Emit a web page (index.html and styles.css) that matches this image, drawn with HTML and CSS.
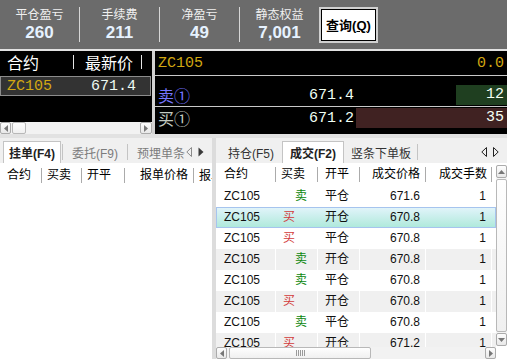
FILE: index.html
```html
<!DOCTYPE html>
<html lang="zh-CN">
<head>
  <meta charset="UTF-8" />
  <meta name="viewport" content="width=device-width,initial-scale=1.0" />
  <title>交易终端</title>
  <link rel="stylesheet" href="styles.css">
</head>
<body>
  <header class="summary">
    <div class="stat"><span class="stat-label">平仓盈亏</span><span class="stat-value">260</span></div>
    <div class="stat-sep"></div>
    <div class="stat"><span class="stat-label">手续费</span><span class="stat-value">211</span></div>
    <div class="stat-sep"></div>
    <div class="stat"><span class="stat-label">净盈亏</span><span class="stat-value">49</span></div>
    <div class="stat-sep"></div>
    <div class="stat"><span class="stat-label">静态权益</span><span class="stat-value">7,001</span></div>
    <button class="query-btn">查询(<u>Q</u>)</button>
  </header>

  <section class="quote">
    <div class="quote-list">
      <div class="quote-head">
        <span class="qh-name">合约</span><span class="qh-sep"></span>
        <span class="qh-price">最新价</span><span class="qh-sep"></span>
      </div>
      <div class="quote-row mono"><span class="gold">ZC105</span><span class="q-last">671.4</span></div>
      <div class="quote-fill"></div>
      <div class="scrollbar mini">
        <span class="sb-btn"><svg width="4" height="7"><path d="M4 0 L0 3.5 L4 7 Z" fill="#777"/></svg></span>
        <span class="sb-thumb mini-thumb"></span>
        <span class="sb-space"></span>
        <span class="sb-btn"><svg width="4" height="7"><path d="M0 0 L4 3.5 L0 7 Z" fill="#777"/></svg></span>
      </div>
    </div>
    <div class="quote-split"></div>
    <div class="depth mono">
      <div class="depth-top"><span class="gold">ZC105</span><span class="gold">0.0</span></div>
      <div class="depth-row depth-sell">
        <span class="depth-label">卖①</span>
        <span class="depth-price">671.4</span>
        <span class="depth-vol"><span class="vol-bar vol-sell" style="width: 51px">12</span></span>
      </div>
      <div class="depth-row depth-buy">
        <span class="depth-label">买①</span>
        <span class="depth-price">671.2</span>
        <span class="depth-vol"><span class="vol-bar vol-buy" style="width: 151px">35</span></span>
      </div>
    </div>
  </section>

  <section class="lower">
    <div class="pane pane-orders">
      <div class="tabs">
        <span class="tab active">挂单(F4)</span>
        <span class="tab tab-divided muted">委托(F9)</span>
        <span class="tab tab-divided muted tab-clip">预埋单条</span>
        <span class="tab-arrows">
          <svg width="6" height="10"><path d="M5.5 0.5 L0.8 5 L5.5 9.5 Z" fill="none" stroke="#8a8a8a"/></svg>
          <svg width="6" height="10"><path d="M0.5 0.5 L5.5 5 L0.5 9.5 Z" fill="#3a3a3a"/></svg>
        </span>
      </div>
      <div class="head-row orders-head">
        <span class="head-cell">合约</span>
        <span class="head-cell">买卖</span>
        <span class="head-cell">开平</span>
        <span class="head-cell num">报单价格</span>
        <span class="head-cell last">报单数量</span>
      </div>
    </div>
    <div class="splitter"></div>
    <div class="pane pane-trades">
      <div class="tabs">
        <span class="tab first">持仓(F5)</span>
        <span class="tab active">成交(F2)</span>
        <span class="tab tab-end">竖条下单板</span>
        <span class="tab-arrows">
          <svg width="6" height="10"><path d="M5.5 0.5 L0.8 5 L5.5 9.5 Z" fill="none" stroke="#222"/></svg>
          <svg width="6" height="10"><path d="M0.5 0.5 L5.2 5 L0.5 9.5 Z" fill="none" stroke="#222"/></svg>
        </span>
      </div>
      <div class="trades-body">
        <div class="grid-area">
          <div class="head-row trades-head">
            <span class="head-cell first">合约</span>
            <span class="head-cell">买卖</span>
            <span class="head-cell">开平</span>
            <span class="head-cell num">成交价格</span>
            <span class="head-cell num">成交手数</span>
            <span class="head-cell last"></span>
          </div>
          <div class="trade-list">
            <div class="trade-row"><span class="code">ZC105</span><span class="sell">卖</span><span class="offset">平仓</span><span class="num">671.6</span><span class="num">1</span><span></span></div>
            <div class="trade-row selected"><span class="code">ZC105</span><span class="buy">买</span><span class="offset">开仓</span><span class="num">670.8</span><span class="num">1</span><span></span></div>
            <div class="trade-row"><span class="code">ZC105</span><span class="buy">买</span><span class="offset">平仓</span><span class="num">670.8</span><span class="num">1</span><span></span></div>
            <div class="trade-row alt"><span class="code">ZC105</span><span class="sell">卖</span><span class="offset">开仓</span><span class="num">670.8</span><span class="num">1</span><span></span></div>
            <div class="trade-row"><span class="code">ZC105</span><span class="sell">卖</span><span class="offset">平仓</span><span class="num">670.8</span><span class="num">1</span><span></span></div>
            <div class="trade-row alt"><span class="code">ZC105</span><span class="buy">买</span><span class="offset">开仓</span><span class="num">670.8</span><span class="num">1</span><span></span></div>
            <div class="trade-row"><span class="code">ZC105</span><span class="sell">卖</span><span class="offset">平仓</span><span class="num">670.8</span><span class="num">1</span><span></span></div>
            <div class="trade-row alt"><span class="code">ZC105</span><span class="buy">买</span><span class="offset">开仓</span><span class="num">671.2</span><span class="num">1</span><span></span></div>
          </div>
          <div class="scrollbar hbar">
            <span class="sb-btn"><svg width="4" height="7"><path d="M4 0 L0 3.5 L4 7 Z" fill="#777"/></svg></span>
            <span class="sb-thumb wide-thumb"><span class="grip"></span></span>
            <span class="sb-space"></span>
            <span class="sb-btn"><svg width="4" height="7"><path d="M0 0 L4 3.5 L0 7 Z" fill="#777"/></svg></span>
          </div>
        </div>
        <div class="vscroll">
          <span class="sb-btn vbtn"><svg width="7" height="4"><path d="M0 4 L3.5 0 L7 4 Z" fill="#777"/></svg></span>
          <span class="sb-thumb vthumb"></span>
          <span class="sb-btn vbtn"><svg width="7" height="4"><path d="M0 0 L3.5 4 L7 0 Z" fill="#777"/></svg></span>
        </div>
      </div>
    </div>
  </section>
</body>
</html>
```

FILE: styles.css
```css
* { margin: 0; padding: 0; box-sizing: border-box; }
body {
  width: 507px;
  height: 359px;
  overflow: hidden;
  background: #e2e2e2;
  font-family: "Liberation Sans", "Noto Sans CJK SC", sans-serif;
  font-size: 12px;
  color: #000;
}

/* summary bar */
.summary {
  height: 49px;
  background: #6b6b6b;
  display: flex;
  align-items: center;
}
.stat {
  width: 79px;
  display: flex;
  flex-direction: column;
  align-items: center;
  gap: 3px;
}
.stat-label {
  font-family: "Noto Sans CJK SC", sans-serif;
  font-size: 12px;
  line-height: 14px;
  color: #f0f0f0;
}
.stat-value {
  font-size: 17px;
  line-height: 18px;
  font-weight: bold;
  color: #e6f2ff;
}
.stat-sep { width: 1px; height: 35px; background: #d6d6d6; }
.query-btn {
  width: 59px;
  height: 36px;
  background: #fff;
  border: 2px solid #d0d0d0;
  box-shadow: inset 0 0 0 1px #000;
  font-family: "Liberation Sans", "Noto Sans CJK SC", sans-serif;
  font-size: 13px;
  font-weight: bold;
  color: #000;
}

/* quote board */
.quote { margin-top: 2px; height: 83px; display: flex; }
.mono { font-family: "Liberation Mono", monospace; font-size: 15px; }
.gold { color: #d2a812; }
.quote-list {
  width: 152px;
  background: #000;
  display: flex;
  flex-direction: column;
}
.quote-head {
  height: 22px;
  display: flex;
  align-items: center;
  color: #fff;
  font-family: "Noto Sans CJK SC", sans-serif;
  font-size: 16px;
  line-height: 1;
}
.qh-name { width: 73px; padding-left: 7px; }
.qh-price { width: 67px; padding-left: 11px; }
.qh-sep { width: 1px; height: 14px; background: #e4e4e4; }
.quote-row {
  margin-top: 3px;
  height: 20px;
  width: 151px;
  background: #333;
  border: 1px solid #8c8c8c;
  display: flex;
  align-items: center;
  justify-content: space-between;
  padding: 0 14px 0 6px;
}
.q-last { color: #eefaf2; }
.quote-fill { flex: 1; }
.quote-split { width: 3px; background: #d2d2d2; }

.depth {
  flex: 1;
  background: #000;
  display: flex;
  flex-direction: column;
}
.depth-top {
  height: 25px;
  border-bottom: 1px solid #c8c8c8;
  display: flex;
  align-items: center;
  justify-content: space-between;
  padding: 0 3px;
}
.depth-row { display: flex; align-items: center; }
.depth-sell { height: 31px; padding: 9px 0 1px; border-bottom: 1px solid #c8c8c8; }
.depth-buy { height: 21px; padding-top: 1px; }
.depth-label {
  width: 60px;
  padding-left: 3px;
  font-family: "Noto Sans CJK SC", sans-serif;
  font-size: 16px;
  line-height: 20px;
}
.depth-sell .depth-label { color: #7676ff; }
.depth-buy .depth-label { color: #c2cac2; }
.depth-price { width: 139px; text-align: right; color: #f0fff4; }
.depth-vol { flex: 1; margin-left: 2px; display: flex; justify-content: flex-end; }
.vol-bar {
  height: 20px;
  line-height: 20px;
  text-align: right;
  padding-right: 3px;
  color: #f4fff4;
}
.vol-sell { background: #1f3f20; }
.vol-buy { background: #402222; }

/* scrollbars */
.scrollbar { height: 12px; display: flex; background: #f2f2f2; }
.sb-btn {
  width: 11px;
  height: 12px;
  border: 1px solid #ababab;
  border-radius: 2px;
  background: linear-gradient(#fdfdfd, #e8e8e8);
  display: flex;
  align-items: center;
  justify-content: center;
}
.sb-thumb {
  border: 1px solid #b8b8b8;
  border-radius: 2px;
  background: linear-gradient(#fefefe, #f0f0f0);
  display: flex;
  align-items: center;
  justify-content: center;
}
.sb-space { flex: 1; }
.mini .sb-btn:last-child { width: 12px; }
.mini-thumb { width: 14px; margin-left: 1px; }
.wide-thumb { width: 142px; margin-left: 2px; }
.grip {
  width: 9px;
  height: 6px;
  background: repeating-linear-gradient(90deg, #9a9a9a 0 1px, transparent 1px 2px);
}
.vscroll {
  width: 11px;
  margin: 2px 0 13px;
  display: flex;
  flex-direction: column;
  background: #f4f4f4;
}
.vbtn { height: 13px; }
.vthumb { flex: 1; margin: 1px 0; }

/* lower panes */
.lower { margin-top: 4px; height: 221px; display: flex; }
.pane { display: flex; flex-direction: column; background: #fff; }
.pane-orders { width: 212px; }
.splitter { width: 4px; background: #dcdcdc; }
.pane-trades { flex: 1; min-width: 0; }

.tabs {
  height: 25px;
  flex-shrink: 0;
  background: #f0f0f0;
  display: flex;
  align-items: flex-end;
  white-space: nowrap;
}
.pane-orders .tabs { padding-left: 3px; }
.tab {
  height: 22px;
  display: flex;
  align-items: center;
  padding: 0 7px;
  color: #333;
}
.tab.active {
  background: #fff;
  border: 1px solid #c4c4c4;
  border-bottom: none;
  font-weight: bold;
  color: #222;
}
.pane-orders .tab.active { padding: 0 5px; }
.tab.first { padding: 0 8px 0 12px; }
.tab-divided {
  height: 16px;
  margin: 0 0 3px 1px;
  border-left: 1px solid #c4c4c4;
  padding: 0 8px 0 9px;
}
.tab-end { height: 16px; margin-bottom: 3px; padding: 0 6px 0 7px; border-right: 1px solid #c4c4c4; }
.muted { color: #7c7c7c; }
.tab-clip { padding-right: 0; }
.tab-arrows {
  margin-left: auto;
  height: 22px;
  display: flex;
  align-items: center;
  gap: 6px;
  padding-right: 8px;
}

.head-row {
  display: grid;
  align-items: center;
  background: #fff;
  flex-shrink: 0;
}
.head-cell {
  height: 15px;
  line-height: 15px;
  padding: 0 5px;
  border-right: 1px solid #ababab;
  white-space: nowrap;
}
.head-cell.num { text-align: right; }
.head-cell.last { border-right: none; overflow: hidden; height: 18px; line-height: 18px; }
.orders-head { height: 25px; grid-template-columns: 42px 40px 43px 69px 18px; }
.orders-head .head-cell:first-child { padding-left: 7px; }
.orders-head .head-cell.last { padding: 0 0 0 5px; }

.trades-body { flex: 1; display: flex; min-height: 0; }
.grid-area { width: 280px; display: flex; flex-direction: column; }
.trades-head { height: 23px; grid-template-columns: 60px 42px 42px 66px 66px 1fr; }
.trades-head .head-cell.first { padding-left: 8px; }
.trades-head .head-cell:nth-child(3) { padding-left: 7px; }
.trades-head .head-cell:nth-child(5) { padding-right: 4px; }
.trade-list { flex: 1; overflow: hidden; }
.trade-row {
  height: 21px;
  display: grid;
  grid-template-columns: 60px 42px 42px 66px 66px 1fr;
}
.trade-row span {
  line-height: 21px;
  padding: 0 5px;
  border-right: 1px solid transparent;
  white-space: nowrap;
  color: #111;
}
.trade-row.alt span { background: #f0f0f0; border-right-color: #fff; }
.trade-row.selected {
  background: linear-gradient(#e3f4fb, #ade9da);
  box-shadow: inset 0 0 0 1px #a6c4ee;
}
.trade-row .code { padding-left: 8px; }
.trade-row .offset { padding-left: 7px; }
.trade-row .num { text-align: right; }
.trade-row .buy { color: #d23a3a; padding-left: 7px; }
.trade-row .sell { color: #0d870d; padding-left: 19px; }
```
